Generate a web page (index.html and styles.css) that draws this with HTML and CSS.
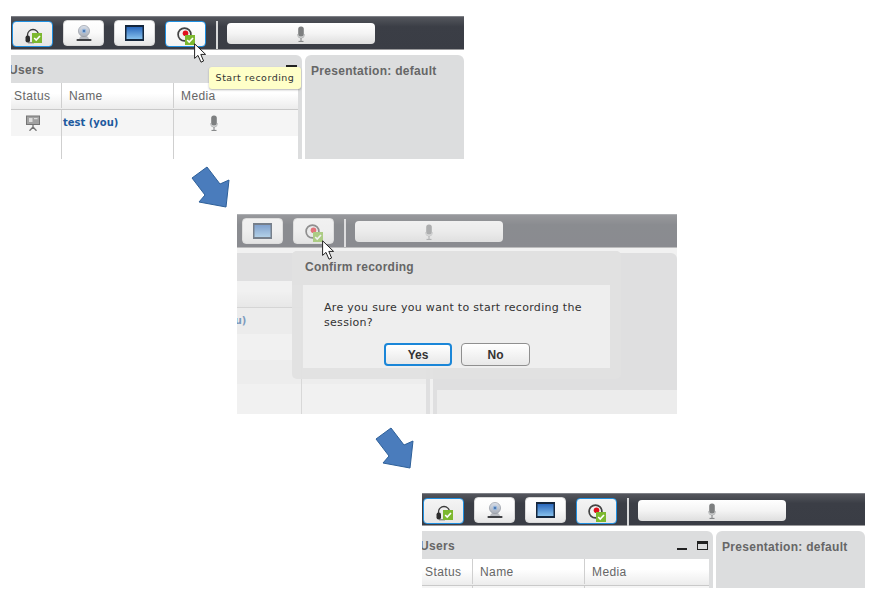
FILE: index.html
```html
<!DOCTYPE html>
<html lang="en">
<head>
    <meta charset="UTF-8">
    <meta name="viewport" content="width=device-width, initial-scale=1.0">
    <title>Start recording</title>
    <link rel="stylesheet" href="styles.css">
</head>
<body>
    <svg class="icon-defs" width="0" height="0">
        <defs>
            <linearGradient id="screenFill" x1="0" y1="0" x2="0" y2="1">
                <stop offset="0" stop-color="#2a68bc"/>
                <stop offset="1" stop-color="#86c0ec"/>
            </linearGradient>
            <linearGradient id="camFill" x1="0" y1="0" x2="0" y2="1">
                <stop offset="0" stop-color="#d8dfea"/>
                <stop offset="1" stop-color="#a9aeb8"/>
            </linearGradient>
            <symbol id="badge" viewBox="0 0 10 10">
                <rect width="10" height="10" fill="#7cb82f"/>
                <path d="M2.2 5 L4.2 7 L8 3" fill="none" stroke="#fff" stroke-width="1.6"/>
            </symbol>
            <symbol id="headset" viewBox="0 0 16 16">
                <path d="M2.5 10 V7 A5.5 5.5 0 0 1 13.5 7 V9" fill="none" stroke="#3a3a3a" stroke-width="1.3"/>
                <rect x="0.5" y="7.5" width="4.5" height="7" rx="2" fill="#2c2c2c"/>
                <path d="M3 14.8 H9" stroke="#666" stroke-width="1"/>
            </symbol>
            <symbol id="webcam" viewBox="0 0 16 16">
                <path d="M3 15 Q3 10.5 8 10.5 Q13 10.5 13 15 Z" fill="#b9bcc2"/>
                <rect x="0.5" y="14" width="15" height="2" rx="0.8" fill="#3f4044"/>
                <circle cx="8" cy="6" r="5.6" fill="url(#camFill)" stroke="#8e939c" stroke-width="0.6"/>
                <circle cx="8" cy="6" r="2.2" fill="#8fb2dc"/>
                <circle cx="8" cy="6" r="0.9" fill="#2e5f9e"/>
            </symbol>
            <symbol id="monitor" viewBox="0 0 19 16">
                <rect width="19" height="16" fill="#14263c"/>
                <rect x="1.5" y="2" width="16" height="12" fill="url(#screenFill)"/>
            </symbol>
            <symbol id="record" viewBox="0 0 15 15">
                <circle cx="7.5" cy="7.5" r="6.4" fill="#f2f2f2" stroke="#444" stroke-width="1.7"/>
                <circle cx="8.5" cy="6.2" r="2.8" fill="#e0101c"/>
            </symbol>
            <symbol id="mic" viewBox="0 0 8 16">
                <rect x="1.2" y="0.5" width="5.6" height="10" rx="2.6" fill="#7d7f80"/>
                <path d="M0.8 8 V9.5 Q0.8 12 4 12 Q7.2 12 7.2 9.5 V8" fill="none" stroke="#a5a7a8" stroke-width="0.8"/>
                <path d="M4 12 V15 M1.5 15.4 H6.5" stroke="#7d7f80" stroke-width="1"/>
            </symbol>
            <symbol id="presenter" viewBox="0 0 14 16">
                <rect x="0.5" y="1" width="13" height="8.5" fill="#a2a2a2" stroke="#757575"/>
                <rect x="3" y="3" width="3.5" height="4" fill="#dcdcdc"/>
                <rect x="8" y="3" width="3.5" height="1.2" fill="#dcdcdc"/>
                <path d="M7 9.5 V13 M7 12 L3.5 15.8 M7 12 L10.5 15.8" stroke="#757575" stroke-width="1.3" fill="none"/>
            </symbol>
            <symbol id="pointer" viewBox="0 0 13 20">
                <path d="M0.6 0.8 V15.4 L4 12.4 L7 19.2 L9.6 18 L6.8 11.4 H11.6 Z" fill="#fff" stroke="#222" stroke-width="1"/>
            </symbol>
            <symbol id="bigArrow" viewBox="0 0 42 44">
                <polygon points="17,2 30,19 39,15 36,42 9,37 15,30 2,13" fill="#4a7cbc" stroke="#2e6099" stroke-width="1"/>
            </symbol>
        </defs>
    </svg>

    <div class="canvas">
        <!-- step 1: hovering the record button -->
        <section class="shot shot-hover">
            <div class="app">
                <div class="toolbar">
                    <button class="tool active"><svg class="ic ic-headset"><use href="#headset"/></svg><svg class="check"><use href="#badge"/></svg></button>
                    <button class="tool"><svg class="ic ic-webcam"><use href="#webcam"/></svg></button>
                    <button class="tool"><svg class="ic ic-monitor"><use href="#monitor"/></svg></button>
                    <button class="tool active tool-hot"><svg class="ic ic-record"><use href="#record"/></svg><svg class="check check-rec"><use href="#badge"/></svg></button>
                    <span class="tool-sep"></span>
                    <button class="tool-wide"><svg class="ic-mic"><use href="#mic"/></svg></button>
                </div>
                <div class="panels">
                    <div class="users-panel">
                        <div class="panel-head">
                            <span class="panel-title users-title">Users</span>
                            <span class="win-btns"><i class="win-min"></i><i class="win-max"></i></span>
                        </div>
                        <div class="users-table">
                            <div class="row row-head"><div class="cell">Status</div><div class="cell cell-name">Name</div><div class="cell">Media</div></div>
                            <div class="row row-user"><div class="cell cell-status"><svg class="ic-presenter"><use href="#presenter"/></svg></div><div class="cell user-name">test (you)</div><div class="cell cell-mic"><svg class="ic-mic"><use href="#mic"/></svg></div></div>
                            <div class="row row-empty"><div class="cell"></div><div class="cell"></div><div class="cell"></div></div>
                        </div>
                    </div>
                    <div class="pres-panel"><div class="panel-title pres-title">Presentation: default</div></div>
                </div>
            </div>
            <div class="tooltip">Start recording</div>
            <svg class="pointer pointer-hover"><use href="#pointer"/></svg>
        </section>

        <svg class="big-arrow arrow-one"><use href="#bigArrow"/></svg>

        <!-- step 2: confirm dialog -->
        <section class="shot shot-confirm">
            <div class="app">
                <div class="toolbar">
                    <button class="tool active"><svg class="ic ic-headset"><use href="#headset"/></svg><svg class="check"><use href="#badge"/></svg></button>
                    <button class="tool"><svg class="ic ic-webcam"><use href="#webcam"/></svg></button>
                    <button class="tool"><svg class="ic ic-monitor"><use href="#monitor"/></svg></button>
                    <button class="tool"><svg class="ic ic-record"><use href="#record"/></svg><svg class="check check-rec"><use href="#badge"/></svg></button>
                    <span class="tool-sep"></span>
                    <button class="tool-wide"><svg class="ic-mic"><use href="#mic"/></svg></button>
                </div>
                <div class="panels">
                    <div class="users-panel">
                        <div class="panel-head">
                            <span class="panel-title users-title">Users</span>
                            <span class="win-btns"><i class="win-min"></i><i class="win-max"></i></span>
                        </div>
                        <div class="users-table">
                            <div class="row row-head"><div class="cell">Status</div><div class="cell cell-name">Name</div><div class="cell">Media</div></div>
                            <div class="row row-user"><div class="cell cell-status"><svg class="ic-presenter"><use href="#presenter"/></svg></div><div class="cell user-name">test (you)</div><div class="cell cell-mic"></div></div>
                            <div class="row row-empty"><div class="cell"></div><div class="cell"></div><div class="cell"></div></div>
                        </div>
                    </div>
                    <div class="pres-panel">
                        <div class="panel-title pres-title">Presentation: default</div>
                        <div class="slide-box"></div>
                    </div>
                </div>
            </div>
            <div class="scrim"></div>
            <div class="dialog">
                <div class="dialog-title">Confirm recording</div>
                <div class="dialog-body">
                    <p class="dialog-text">Are you sure you want to start recording the session?</p>
                    <div class="dialog-btns">
                        <button class="dlg-btn dlg-default">Yes</button>
                        <button class="dlg-btn">No</button>
                    </div>
                </div>
            </div>
            <svg class="pointer pointer-confirm"><use href="#pointer"/></svg>
        </section>

        <svg class="big-arrow arrow-two"><use href="#bigArrow"/></svg>

        <!-- step 3: recording on -->
        <section class="shot shot-done">
            <div class="app">
                <div class="toolbar">
                    <button class="tool active"><svg class="ic ic-headset"><use href="#headset"/></svg><svg class="check"><use href="#badge"/></svg></button>
                    <button class="tool"><svg class="ic ic-webcam"><use href="#webcam"/></svg></button>
                    <button class="tool"><svg class="ic ic-monitor"><use href="#monitor"/></svg></button>
                    <button class="tool active"><svg class="ic ic-record"><use href="#record"/></svg><svg class="check check-rec"><use href="#badge"/></svg></button>
                    <span class="tool-sep"></span>
                    <button class="tool-wide"><svg class="ic-mic"><use href="#mic"/></svg></button>
                </div>
                <div class="panels">
                    <div class="users-panel">
                        <div class="panel-head">
                            <span class="panel-title users-title">Users</span>
                            <span class="win-btns"><i class="win-min"></i><i class="win-max"></i></span>
                        </div>
                        <div class="users-table">
                            <div class="row row-head"><div class="cell">Status</div><div class="cell cell-name">Name</div><div class="cell">Media</div></div>
                            <div class="row row-user"><div class="cell"></div><div class="cell"></div><div class="cell"></div></div>
                        </div>
                    </div>
                    <div class="pres-panel"><div class="panel-title pres-title">Presentation: default</div></div>
                </div>
            </div>
        </section>
    </div>
</body>
</html>
```

FILE: styles.css
```css
* {
    box-sizing: border-box;
}
body {
    margin: 0;
    background-color: #fff;
    font-family: "Liberation Sans", Arial, sans-serif;
}
.icon-defs {
    position: absolute;
}
.canvas {
    position: relative;
    width: 880px;
    height: 600px;
    overflow: hidden;
}

/* the three screenshots sit freely on the canvas */
.shot {
    position: absolute;
    overflow: hidden;
}
.shot-hover {
    left: 11px;
    top: 16px;
    width: 453px;
    height: 143px;
}
.shot-confirm {
    left: 237px;
    top: 214px;
    width: 440px;
    height: 200px;
}
.shot-confirm .app {
    margin-left: -98px;
    width: 538px;
}
.shot-done {
    left: 422px;
    top: 493px;
    width: 443px;
    height: 95px;
}
.shot-done .toolbar {
    height: 33px;
}

/* toolbar */
.toolbar {
    display: flex;
    align-items: flex-start;
    gap: 10px;
    height: 34px;
    padding: 4px 0 0 1px;
    background: linear-gradient(#54565d, #3b3e46 30%, #3a3d45);
    border-top: 1px solid #7e8086;
    border-bottom: 1px solid #9a9a9c;
}
.tool {
    position: relative;
    width: 41px;
    height: 26px;
    flex: none;
    margin-top: -1px;
    padding: 0;
    border: 1px solid #d8d8d8;
    border-radius: 4px;
    background: linear-gradient(#fff, #fafafa 50%, #e6e6e6);
}
.tool.active {
    height: 26px;
    margin-top: 0;
    border: 1px solid #1f8fe0;
    background: linear-gradient(#f4f4f4, #e6e6e6);
}
.tool.tool-hot {
    background: linear-gradient(#fff, #f4f4f4);
}
.ic {
    position: absolute;
}
.ic-headset {
    left: 12px;
    top: 6px;
    width: 16px;
    height: 16px;
}
.ic-webcam {
    left: 12px;
    top: 4px;
    width: 16px;
    height: 16px;
}
.ic-monitor {
    left: 10px;
    top: 4px;
    width: 19px;
    height: 16px;
}
.ic-record {
    left: 11px;
    top: 5px;
    width: 15px;
    height: 15px;
}
.check {
    position: absolute;
    left: 19px;
    top: 11px;
    width: 10px;
    height: 10px;
}
.check-rec {
    left: 19px;
    top: 13px;
}
.tool-sep {
    width: 2px;
    height: 28px;
    flex: none;
    background-color: #d8d9da;
}
.tool-wide {
    display: flex;
    align-items: center;
    justify-content: center;
    width: 148px;
    height: 21px;
    flex: none;
    margin: 2px 0 0 -1px;
    padding: 0;
    border: none;
    border-radius: 4px;
    background: linear-gradient(#fff, #f4f4f4 50%, #dedede);
}
.ic-mic {
    width: 8px;
    height: 16px;
}

/* panels under the toolbar */
.panels {
    display: flex;
    gap: 3px;
    height: 400px;
    padding-top: 5px;
}
.users-panel {
    width: 291px;
    flex: none;
    padding-right: 4px;
    border-top-right-radius: 6px;
    background-color: #dcddde;
}
.panel-head {
    display: flex;
    align-items: center;
    justify-content: space-between;
    height: 28px;
    padding-top: 1px;
}
.panel-title {
    font-size: 12px;
    font-weight: bold;
    letter-spacing: 0.3px;
    color: #666;
}
.users-title {
    margin-left: -2px;
}
.win-btns {
    display: flex;
    align-items: flex-end;
    gap: 10px;
    margin: 0 1px 0 0;
}
.win-min {
    display: block;
    width: 10px;
    height: 2px;
    background-color: #222;
}
.win-max {
    display: block;
    width: 11px;
    height: 9px;
    border: 1px solid #222;
    border-top-width: 3px;
    background-color: #dcddde;
}
.users-table {
    height: 372px;
    background-color: #fff;
}
.row {
    display: grid;
    grid-template-columns: 51px 112px 1fr;
    font-size: 12px;
    letter-spacing: 0.4px;
    color: #666;
}
.cell {
    display: flex;
    align-items: center;
    padding-left: 3px;
    border-right: 1px solid #cfcfcf;
}
.cell:last-child {
    border-right: none;
    padding-left: 7px;
}
.cell-name {
    padding-left: 7px;
}
.row-head {
    height: 27px;
    padding-bottom: 1px;
    background: linear-gradient(#fff, #fff 40%, #ececec);
    border-bottom: 1px solid #c9c9c9;
}
.row-user {
    height: 26px;
    background-color: #f5f5f5;
}
.row-empty {
    height: 320px;
    background: linear-gradient(#fff 26px, #f8f8f8 26px, #f8f8f8 50px, #fff 50px);
}
.cell-status {
    padding-left: 15px;
}
.cell-mic,
.cell-mic:last-child {
    padding-left: 36px;
}
.ic-presenter {
    width: 14px;
    height: 16px;
}
.user-name {
    padding: 0 0 2px 1px;
    font-family: "DejaVu Sans", sans-serif;
    font-size: 10px;
    font-weight: bold;
    letter-spacing: 0;
    color: #1d5a9e;
}
.pres-panel {
    flex: 1;
    border-radius: 6px 6px 0 0;
    padding: 9px 6px;
    background-color: #dcddde;
}
.pres-title {
    line-height: 14px;
}
.slide-box {
    height: 200px;
    margin: 114px -6px 0 -2px;
    background-color: #f6f6f6;
}

/* tooltip and pointers lie over the app */
.tooltip {
    position: absolute;
    left: 198px;
    top: 51px;
    width: 92px;
    height: 22px;
    border-radius: 3px;
    background-color: #ffffc8;
    box-shadow: 0 1px 2px rgba(0, 0, 0, 0.3);
    font-family: "DejaVu Sans", sans-serif;
    font-size: 9.5px;
    letter-spacing: 0.5px;
    line-height: 22px;
    text-align: center;
    color: #333;
}
.pointer {
    position: absolute;
    width: 13px;
    height: 20px;
}
.pointer-hover {
    left: 183px;
    top: 27px;
}
.pointer-confirm {
    left: 85px;
    top: 26px;
}
.big-arrow {
    position: absolute;
    width: 42px;
    height: 44px;
}
.arrow-one {
    left: 190px;
    top: 165px;
}
.arrow-two {
    left: 374px;
    top: 426px;
}

/* confirm dialog */
.scrim {
    position: absolute;
    inset: 0;
    background-color: rgba(225, 225, 225, 0.48);
}
.dialog {
    position: absolute;
    left: 55px;
    top: 37px;
    width: 329px;
    height: 128px;
    padding: 0 11px;
    border-radius: 5px;
    background-color: rgba(225, 225, 225, 0.97);
}
.dialog-title {
    height: 34px;
    margin: 0 -11px;
    padding: 9px 13px 0;
    border-radius: 5px 5px 0 0;
    background-color: #e1e1e1;
    font-size: 12px;
    font-weight: bold;
    letter-spacing: 0.25px;
    color: #666;
}
.dialog-body {
    height: 83px;
    padding: 15px 0 0 21px;
    background-color: rgba(240, 240, 240, 0.9);
}
.dialog-text {
    margin: 0;
    width: 270px;
    font-family: "DejaVu Sans", sans-serif;
    font-size: 11px;
    letter-spacing: 0.3px;
    line-height: 15px;
    color: #333;
}
.dialog-btns {
    display: flex;
    gap: 9px;
    margin: 13px 0 0 60px;
}
.dlg-btn {
    width: 69px;
    height: 23px;
    padding: 0;
    border: 1px solid #8f8f8f;
    border-radius: 4px;
    background: linear-gradient(#fff, #e8e8e8);
    font-family: "Liberation Sans", Arial, sans-serif;
    font-size: 12px;
    font-weight: bold;
    color: #333;
}
.dlg-default {
    width: 68px;
    border: 2px solid #1a86d8;
}
```
